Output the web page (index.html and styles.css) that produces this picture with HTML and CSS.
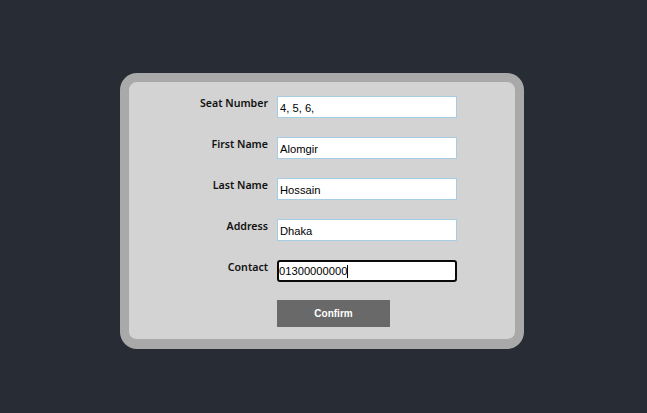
FILE: index.html
```html
<!DOCTYPE html>
<html>
<head>
<meta charset="utf-8">
<link rel="stylesheet" href="styles.css">
</head>
<body>
<div class="page">
  <form class="card">
    <label class="lbl" for="seat">Seat Number</label>
    <input class="field" id="seat" type="text" value="4, 5, 6,">
    <label class="lbl" for="first">First Name</label>
    <input class="field" id="first" type="text" value="Alomgir">
    <label class="lbl" for="last">Last Name</label>
    <input class="field" id="last" type="text" value="Hossain">
    <label class="lbl" for="addr">Address</label>
    <input class="field" id="addr" type="text" value="Dhaka">
    <label class="lbl" for="contact">Contact</label>
    <div class="field focused"><span class="val">01300000000</span><span class="caret"></span></div>
    <span></span>
    <button type="button" class="btn">Confirm</button>
  </form>
</div>
</body>
</html>
```
FILE: styles.css
```css
html, body {
  margin: 0;
  padding: 0;
  background: #282c35;
  height: 100%;
}
.page {
  padding-top: 73px;
  display: flex;
  justify-content: center;
  padding-right: 3px;
}
.card {
  box-sizing: border-box;
  width: 404px;
  height: 276px;
  background: #d3d3d3;
  border: 9px solid #a9a9a9;
  border-bottom-width: 10px;
  border-radius: 17px;
  display: grid;
  grid-template-columns: 139px 180px;
  column-gap: 9px;
  row-gap: 19px;
  align-content: start;
  padding: 14px 0 0 0;
}
.lbl {
  font-family: "Noto Sans", "DejaVu Sans", sans-serif;
  font-size: 10.6px;
  font-weight: 600;
  color: #111;
  text-align: right;
  line-height: 14px;
}
.field {
  box-sizing: border-box;
  width: 180px;
  height: 22px;
  margin: 0;
  border: 1px solid #a6cde6;
  background: #fff;
  font-family: "Liberation Sans", Arial, sans-serif;
  font-size: 11.2px;
  color: #000;
  padding: 1px 2px 0;
  outline: none;
}
.focused {
  border: 2px solid #0a0a0a;
  border-radius: 3px;
  padding: 0;
  display: flex;
  align-items: center;
  line-height: 14px;
  height: 22px;
}
.caret {
  display: inline-block;
  width: 1px;
  height: 13px;
  background: #000;
}
.btn {
  margin-top: -1px;
  width: 113px;
  height: 27px;
  border: none;
  background: #696969;
  color: #fff;
  font-family: "Liberation Sans", Arial, sans-serif;
  font-weight: bold;
  font-size: 10px;
  padding: 0;
}
```
